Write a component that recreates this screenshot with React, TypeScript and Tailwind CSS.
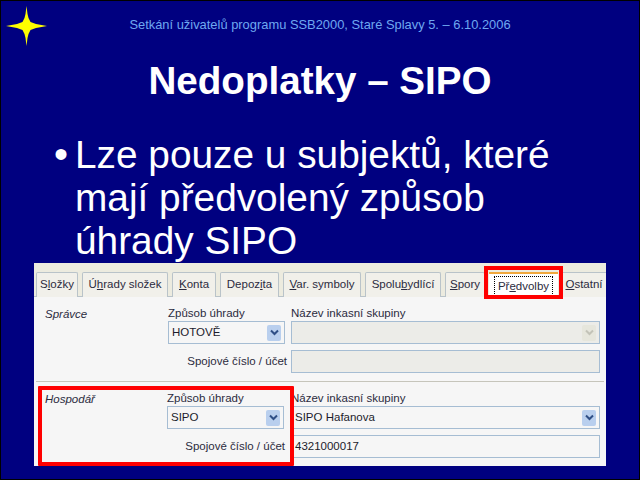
const tabs: { pre: string; u: string; post: string; w: string }[] = [
  { pre: "S", u: "l", post: "ožky", w: "w-[42px]" },
  { pre: "Ú", u: "h", post: "rady složek", w: "w-[86px]" },
  { pre: "", u: "K", post: "onta", w: "w-[44px]" },
  { pre: "Depoz", u: "i", post: "ta", w: "w-[59px]" },
  { pre: "", u: "V", post: "ar. symboly", w: "w-[78px]" },
  { pre: "Spolu", u: "b", post: "ydlící", w: "w-[76px]" },
  { pre: "", u: "S", post: "pory", w: "w-[40px]" },
];

function Tab({ pre, u, post, w }: { pre: string; u: string; post: string; w: string }) {
  return (
    <div className={`${w} h-[25px] shrink-0 flex items-center justify-center rounded-t-[2px] border border-b-0 border-[#b9c3c9] bg-[#f1f0ea] text-[11.5px] text-[#2b2b40]`}>
      <span>
        {pre}
        <span className="underline">{u}</span>
        {post}
      </span>
    </div>
  );
}

function Chevron({ on }: { on: boolean }) {
  return (
    <div className={`w-[14px] h-[16px] rounded-[2px] flex items-center justify-center ${on ? "bg-[#b9cfee]" : "bg-[#e6e6dc]"}`}>
      <svg width="9" height="7" viewBox="0 0 9 7">
        <path d="M1 1.5 L4.5 5 L8 1.5" fill="none" stroke={on ? "#2f4f86" : "#c3c3b8"} strokeWidth="2" />
      </svg>
    </div>
  );
}

function Select({ value, on, w }: { value: string; on: boolean; w: string }) {
  return (
    <div className={`${w} h-[23px] flex items-center justify-between pl-[3px] pr-[3px] border border-[#a6bdd3] text-[11.5px] text-[#1c1c2c] ${on ? "bg-[#f6f6f6]" : "bg-[#ecece8]"}`}>
      <span>{value}</span>
      <Chevron on={on} />
    </div>
  );
}

function Input({ value, on, w }: { value: string; on: boolean; w: string }) {
  return (
    <div className={`${w} h-[23px] flex items-center pl-[3px] border border-[#a6bdd3] text-[11.5px] text-[#1c1c2c] ${on ? "bg-[#f6f6f6]" : "bg-[#ecece8]"}`}>
      {value}
    </div>
  );
}

export default function App() {
  return (
    <div className="w-[640px] h-[480px] bg-[#000080] border border-black overflow-hidden relative font-['Liberation_Sans',sans-serif]">
      <svg className="absolute left-[5px] top-[5px]" width="41" height="40" viewBox="0 0 41 40">
        <path d="M20.5 0 L21.5 8 L22.5 12 L24.5 16 L30 18 L41 20 L30 22 L24.5 24 L22.5 28 L21.5 32 L20.5 40 L19.5 32 L18.5 28 L16.5 24 L11 22 L0 20 L11 18 L16.5 16 L18.5 12 L19.5 8 Z" fill="#ffff00" />
      </svg>

      <div className="pt-[16px] h-[33px] text-center text-[12.9px] leading-[15px] text-[#6fa8f0]">
        Setkání uživatelů programu SSB2000, Staré Splavy 5. – 6.10.2006
      </div>

      <div className="mt-[25px] text-center text-[38.6px] leading-[44px] font-bold text-white">
        Nedoplatky – SIPO
      </div>

      <div className="mt-[30px] ml-[53px] flex items-start text-white text-[38.8px] leading-[43px]">
        <span className="w-[21px] shrink-0 text-[40px] leading-[43px]">•</span>
        <div>
          Lze pouze u subjektů, které
          <br />
          mají předvolený způsob
          <br />
          úhrady SIPO
        </div>
      </div>

      <div className="absolute left-[33px] top-[262px] w-[572px] h-[203px] bg-[#f6f6f6] flex flex-col">
        <div className="h-[34px] pt-[9px] pl-[2px] flex items-start gap-[4px] bg-[#ecebdf] border-b border-[#b9c3c9]">
          {tabs.map((t) => (
            <Tab key={t.pre + t.u} {...t} />
          ))}
          <div className="w-[69px] h-[25px] shrink-0 flex items-center justify-center bg-white border-t-2 border-[#f0a83c] text-[11.5px] text-[#2b2b40]">
            <span className="border border-dotted border-black px-[3px] leading-[18px]">
              Př<span className="underline">e</span>dvolby
            </span>
          </div>
          <div className="w-[44px] h-[25px] shrink-0 flex items-center justify-center text-[11.5px] text-[#2b2b40] border-t border-[#b9c3c9] bg-[#f1f0ea]">
            <span>
              <span className="underline">O</span>statní
            </span>
          </div>
        </div>

        <div className="flex pt-[9px] h-[85px] border-b border-[#c6c5bb] mx-[2px]">
          <div className="w-[132px] pl-[9px] pt-[1px] italic text-[11.5px] leading-[14px] text-[#2b2b40]">Správce</div>
          <div className="w-[123px] flex flex-col">
            <div className="h-[15px] text-[11.5px] leading-[14px] text-[#2b2b40]">Způsob úhrady</div>
            <Select value="HOTOVĚ" on w="w-[117px]" />
            <div className="mt-[10px] w-[119px] text-right text-[11.5px] leading-[14px] text-[#2b2b40]">Spojové číslo / účet</div>
          </div>
          <div className="flex flex-col">
            <div className="h-[15px] text-[11.5px] leading-[14px] text-[#2b2b40]">Název inkasní skupiny</div>
            <Select value="" on={false} w="w-[309px]" />
            <div className="mt-[6px]">
              <Input value="" on={false} w="w-[309px]" />
            </div>
          </div>
        </div>

        <div className="flex pt-[9px] mx-[2px]">
          <div className="w-[132px] pl-[9px] pt-[1px] italic text-[11.5px] leading-[14px] text-[#2b2b40]">Hospodář</div>
          <div className="w-[123px] -ml-[1px] mr-[1px] flex flex-col">
            <div className="h-[15px] text-[11.5px] leading-[14px] text-[#2b2b40]">Způsob úhrady</div>
            <Select value="SIPO" on w="w-[117px]" />
            <div className="mt-[10px] w-[118px] text-right text-[11.5px] leading-[14px] text-[#2b2b40]">Spojové číslo / účet</div>
          </div>
          <div className="flex flex-col">
            <div className="h-[15px] text-[11.5px] leading-[14px] text-[#2b2b40]">Název inkasní skupiny</div>
            <Select value="SIPO Hafanova" on w="w-[309px]" />
            <div className="mt-[6px]">
              <Input value="4321000017" on w="w-[309px]" />
            </div>
          </div>
        </div>
      </div>

      <div className="absolute left-[483px] top-[265px] w-[79px] h-[33px] border-[4px] border-[#ff0000]" />
      <div className="absolute left-[37px] top-[385px] w-[256px] h-[80px] border-[4px] border-[#ff0000] rounded-[1px]" />
    </div>
  );
}
